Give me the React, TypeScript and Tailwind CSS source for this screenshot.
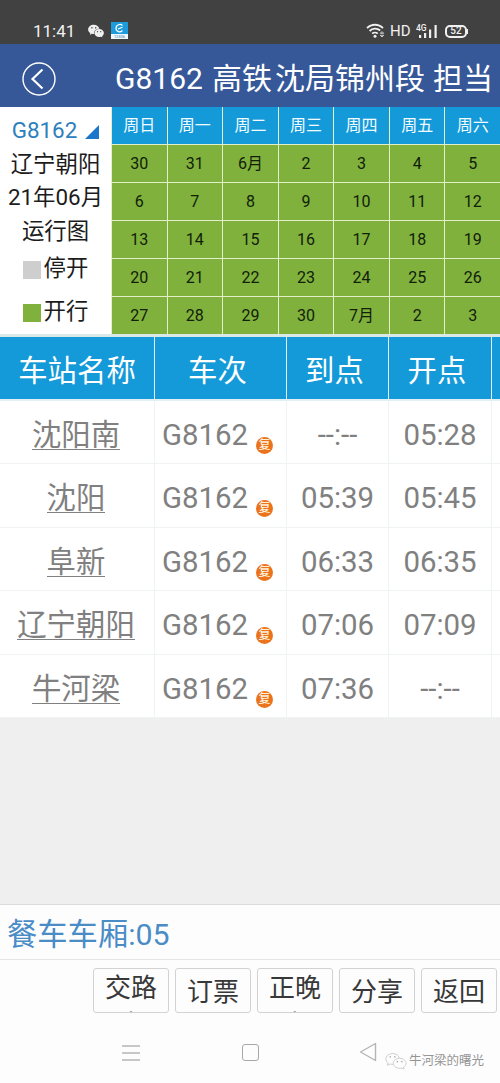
import { AiFillWechat } from 'react-icons/ai'

const weekdays = ['周日', '周一', '周二', '周三', '周四', '周五', '周六']

const days = [
  '30', '31', '6月', '2', '3', '4', '5',
  '6', '7', '8', '9', '10', '11', '12',
  '13', '14', '15', '16', '17', '18', '19',
  '20', '21', '22', '23', '24', '25', '26',
  '27', '28', '29', '30', '7月', '2', '3',
]

const stops = [
  { name: '沈阳南', arrive: '--:--', depart: '05:28' },
  { name: '沈阳', arrive: '05:39', depart: '05:45' },
  { name: '阜新', arrive: '06:33', depart: '06:35' },
  { name: '辽宁朝阳', arrive: '07:06', depart: '07:09' },
  { name: '牛河梁', arrive: '07:36', depart: '--:--' },
]

const actions = ['交路表', '订票', '正晚点', '分享', '返回']

function StatusBar() {
  return (
    <div className="flex h-[44px] items-start bg-[#414141] pt-[20px] text-[#f0f0f0]">
      <span className="ml-[33px] w-[54px] text-[17px] leading-[22px]">11:41</span>
      <AiFillWechat className="mt-[2px] size-[18px]" />
      <div className="ml-[6px] mt-[2px] flex h-[17px] w-[17px] flex-col bg-[#1d9bdc]">
        <svg viewBox="0 0 17 12" className="h-[12px] w-[17px]" fill="none" stroke="#fff" strokeWidth="1.2">
          <path d="M11.5 3.6C9.5 1.2 5 2.7 5 6.3c0 3.5 4.3 4.8 6.4 2.2M7 7l4.5-1.7" />
        </svg>
        <div className="flex h-[5px] items-center justify-center bg-[#eef8fd]">
          <span className="text-[4px] leading-none text-[#3c7da3]">12306</span>
        </div>
      </div>
      <div className="ml-auto mr-[32px] flex h-[22px] items-center">
        <svg viewBox="0 0 19 16" className="h-[16px] w-[19px]" fill="none" stroke="#f0f0f0" strokeWidth="1.8">
          <path d="M1 5.2C5.5 .6 12.5 .6 17 5.2M3.600 8C6.500 5 11 4.700 14.200 7.500M6.200 10.700c1.500-1.500 4-1.500 5.500 0" />
          <circle cx="9" cy="13.3" r="1.5" fill="#f0f0f0" stroke="none" />
          <path d="m14.300 10.300 1.700-1.700 1.700 1.700zM14.300 12.300l1.700 1.700 1.700-1.700z" strokeWidth=".8" />
        </svg>
        <span className="ml-[5px] w-[24px] text-[15px] leading-none">HD</span>
        <svg viewBox="0 0 22 16" className="ml-[2px] h-[16px] w-[22px]" fill="#f0f0f0">
          <text x="0" y="7.5" fontSize="8.5" fontFamily="Roboto, sans-serif" fontWeight="500">4G</text>
          <path d="M3 12h2.200v3H3zM8 10h2.200v5H8zM13 6.500h2.200V15H13zM18.500 2h2.200v13h-2.200z" />
        </svg>
        <div className="ml-[7px] flex items-center">
          <div className="flex h-[13px] w-[22px] items-center justify-center rounded-[5px] border-2 border-[#f0f0f0] text-[10px] font-medium leading-none">
            52
          </div>
          <div className="h-[5px] w-[1px] bg-[#f0f0f0]" />
        </div>
      </div>
    </div>
  )
}

function TitleBar() {
  return (
    <header className="flex h-[63px] items-center bg-[#365899] text-white">
      <svg viewBox="0 0 34 34" className="ml-[22px] mt-[7px] size-[34px]" fill="none" stroke="currentColor">
        <circle cx="17" cy="17" r="16" strokeWidth="1.400" />
        <path d="M20.500 7.500 10.500 17l10 9.500" strokeWidth="2.200" />
      </svg>
      <h1 className="ml-[59px] mt-[6px] flex whitespace-nowrap text-[30px] leading-[40px]">
        <span className="w-[97px]">G8162</span>
        <span className="w-[63px]">高铁</span>
        <span className="w-[158px]">沈局锦州段</span>
        <span>担当</span>
      </h1>
    </header>
  )
}

function Calendar() {
  return (
    <section className="flex h-[230px] border-b-[3px] border-[#d9e9e8] bg-white">
      <div className="flex w-[111px] flex-col items-center pt-[7px] text-[22.400px] leading-[33.500px] text-[#1c1c1c]">
        <div className="flex items-center text-[#2c80bd]">
          <span>G8162</span>
          <svg viewBox="0 0 14 14" className="ml-[8px] mt-[2px] size-[14px]">
            <path d="M14 0v14H0z" fill="#1976c8" />
          </svg>
        </div>
        <div>辽宁朝阳</div>
        <div>21年06月</div>
        <div>运行图</div>
        <div className="mt-[4px] flex items-center">
          <i className="mr-[3px] mt-[3px] size-[18px] bg-[#cecece]" />
          停开
        </div>
        <div className="mt-[9px] flex items-center">
          <i className="mr-[3px] mt-[3px] size-[18px] bg-[#80b13c]" />
          开行
        </div>
      </div>
      <div className="grid flex-1 grid-cols-7 grid-rows-[37px_repeat(5,minmax(0,1fr))] gap-px bg-[#e2efc9] pl-px text-center">
        {weekdays.map((day) => (
          <div key={day} className="bg-[#149ad8] text-[16px] leading-[38px] text-[#f2fbff]">
            {day}
          </div>
        ))}
        {days.map((day, i) => (
          <div key={i} className="bg-[#80b13c] text-[16px] leading-[37px] text-[#10200a]">
            {day}
          </div>
        ))}
      </div>
    </section>
  )
}

function StopTable() {
  return (
    <section className="bg-white">
      <div className="grid h-[64px] grid-cols-[155px_132px_102px_103px_8px] border-b-2 border-[#e3f1f6] bg-[#149ad8] text-center text-[29.400px] leading-[68px] text-white">
        <div className="border-r border-[#e3f1f6]">车站名称</div>
        <div className="border-r border-[#e3f1f6] pr-[6px]">车次</div>
        <div className="border-r border-[#e3f1f6] pr-[6px]">到点</div>
        <div className="border-r border-[#e3f1f6] pr-[6px]">开点</div>
        <div />
      </div>
      {stops.map((stop) => (
        <div
          key={stop.name}
          className="grid h-[63.400px] grid-cols-[155px_132px_102px_103px_8px] border-b border-[#eff3f3] text-center text-[29.400px] leading-[68px] text-[#808080]"
        >
          <div className="border-r border-[#eff3f3] pr-[2px]">
            <span className="inline-block h-[34px] whitespace-nowrap border-b border-[#808080] leading-[38px]">
              {stop.name}
            </span>
          </div>
          <div className="flex border-r border-[#eff3f3] pl-[7px]">
            <span className="w-[94px] text-left">G8162</span>
            <span className="mt-[36px] size-[17px] rounded-full bg-[#ea731c] text-[12px] font-medium leading-[17px] text-[#fff0dc]">复</span>
          </div>
          <div className="border-r border-[#eff3f3]">{stop.arrive}</div>
          <div className="border-r border-[#eff3f3]">{stop.depart}</div>
          <div />
        </div>
      ))}
    </section>
  )
}

function ActionBar() {
  return (
    <footer className="flex h-[53px] justify-end gap-[6px] pr-[3px] pt-[8px]">
      {actions.map((label) => (
        <button
          key={label}
          className={`h-[45px] w-[76px] overflow-hidden rounded-[3px] border border-[#d2d2d2] px-[10px] text-[26px] leading-[37px] text-[#383838] ${
            label.length > 2 ? 'flex items-start pt-px' : ''
          }`}
        >
          <span className={label.length > 2 ? 'block w-[54px]' : 'mt-[3px] block'}>{label}</span>
        </button>
      ))}
    </footer>
  )
}

function NavBar() {
  return (
    <nav className="flex h-[70px] items-start pt-[30px]">
      <svg viewBox="0 0 18 18" className="ml-[122px] mt-px size-[18px]" stroke="#b5b5b5" strokeWidth="1.400">
        <path d="M0 2h18M0 9h18M0 16h18" />
      </svg>
      <div className="ml-[102px] mt-px size-[17px] rounded-[3px] border border-[#a8a8a8]" />
      <svg viewBox="0 0 18 20" className="ml-[100px] mt-[-1px] h-[20px] w-[18px]" fill="none" stroke="#b5b5b5" strokeWidth="1.400" strokeLinejoin="round">
        <path d="M16.500 1.500v17L1.500 10z" />
      </svg>
      <div className="ml-[8px] mt-[8px] flex items-center text-[#959595]">
        <svg viewBox="0 0 22 18" className="h-[18px] w-[22px]" fill="none" stroke="#c4c4c4" strokeWidth=".8">
          <path d="M8 12.300c-1 .1-2 0-2.800-.3L2.500 13.300l.6-2.400C-1.500 7.500 1.500 1.500 7.500 1.500c3.500 0 6.200 1.900 6.800 4.600" />
          <path d="M14.500 6.300c3.800 0 6.500 2.300 6.500 5 0 1.700-1 3.100-2.500 4l.4 1.700-2.100-1c-4.400 1.100-8.500-1.200-8.500-4.700 0-2.700 2.800-5 6.200-5z" />
          <path d="M4.600 4.800h1.300M9.200 4.800h1.300M11.800 9.700h1.200M16.200 9.700h1.200" stroke="#999" strokeWidth="1.300" />
        </svg>
        <span className="ml-[2px] whitespace-nowrap text-[12.500px] leading-[20px]">牛河梁的曙光</span>
      </div>
    </nav>
  )
}

export default function App() {
  return (
    <div className="flex h-[1083px] w-[500px] flex-col overflow-hidden bg-[#fdfdfd] font-['Roboto','Noto_Sans_CJK_SC',sans-serif]">
      <StatusBar />
      <TitleBar />
      <Calendar />
      <StopTable />
      <div className="flex-1 border-b border-[#dcdcdc] bg-[#efefef]" />
      <div className="h-[55px] border-b border-[#e6e6e6] pl-[7px] text-[30.300px] leading-[60px] text-[#4a8cc6]">
        餐车车厢:05
      </div>
      <ActionBar />
      <NavBar />
    </div>
  )
}
